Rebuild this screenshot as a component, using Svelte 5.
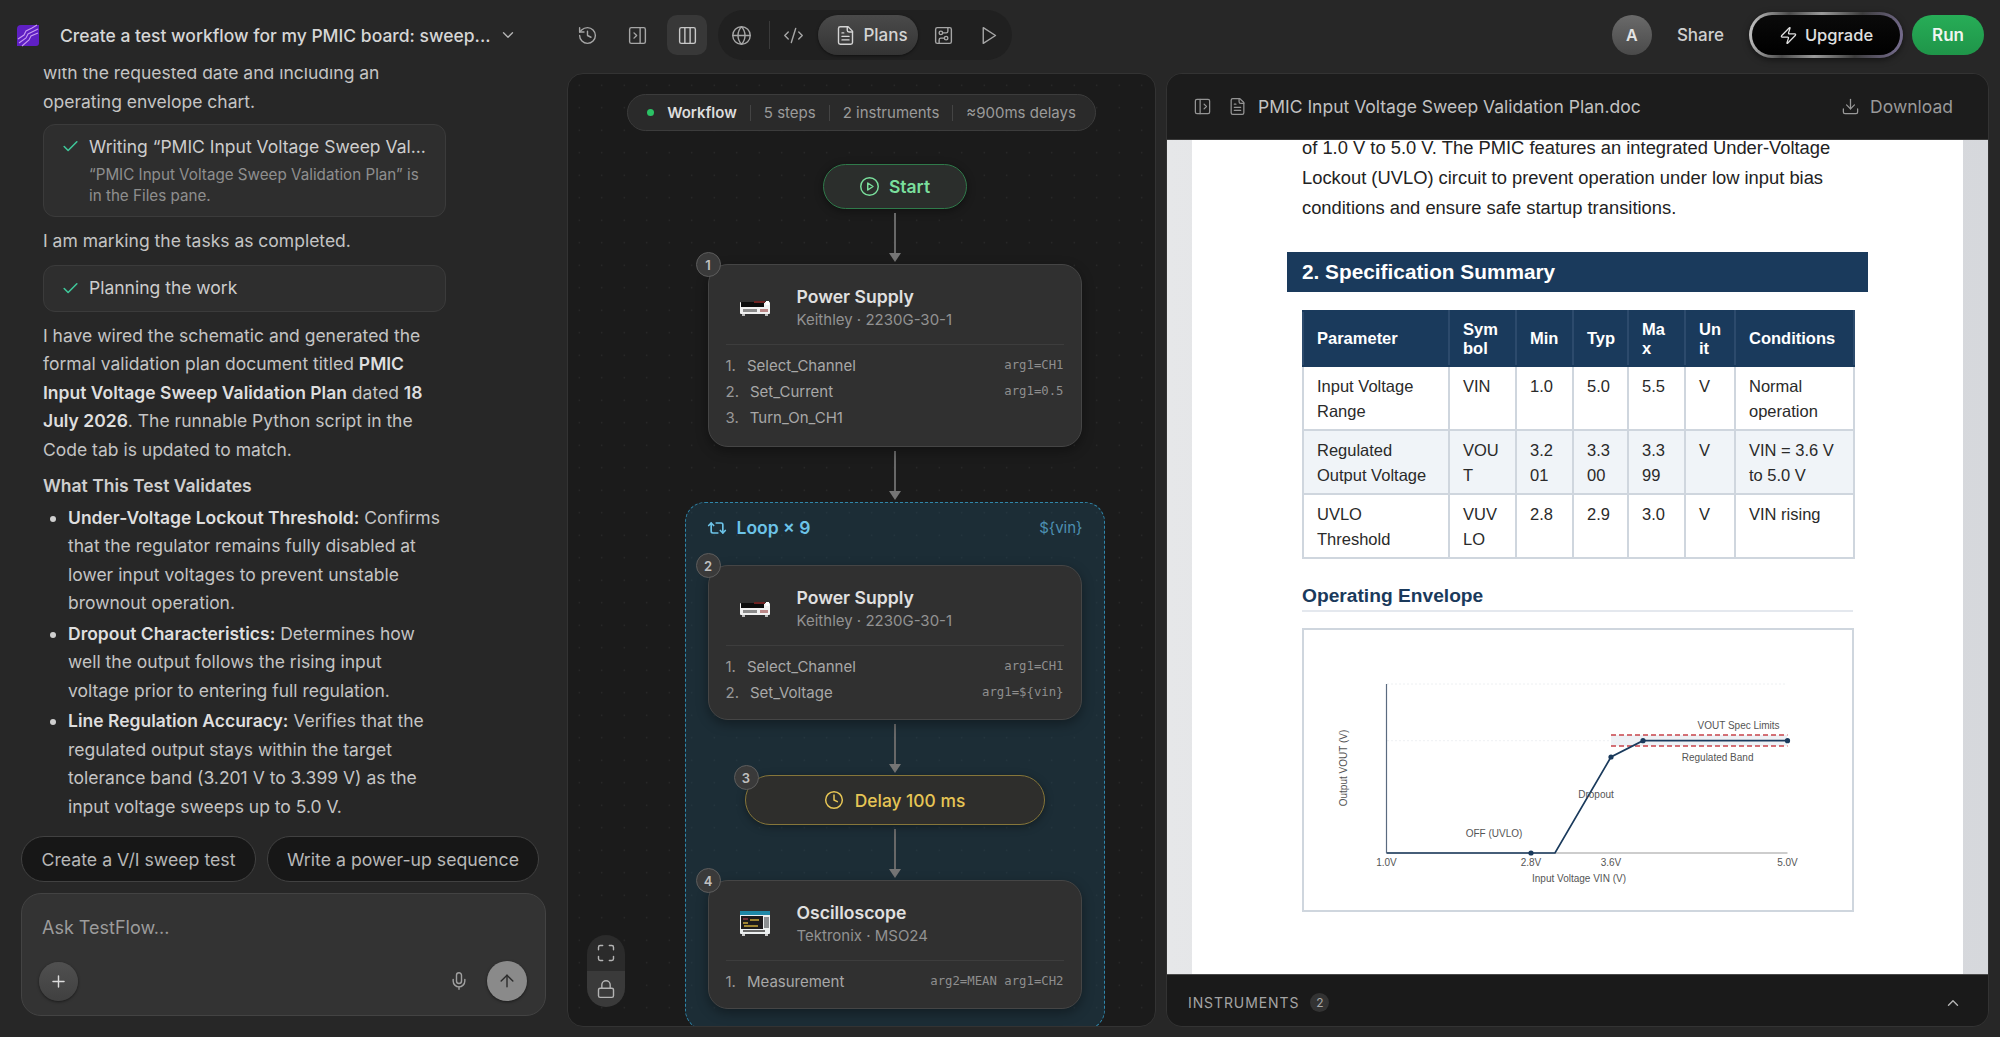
<script lang="ts">
  const icons: Record<string, string> = {
    history: '<path d="M3 12a9 9 0 1 0 9-9 9.75 9.75 0 0 0-6.74 2.74L3 8"/><path d="M3 3v5h5"/><path d="M12 7v5l4 2"/>',
    panelRight: '<rect width="18" height="18" x="3" y="3" rx="2"/><path d="M15 3v18"/><path d="m8 9 3 3-3 3"/>',
    panelLeft: '<rect width="18" height="18" x="3" y="3" rx="2"/><path d="M9 3v18"/><path d="m14 9 3 3-3 3"/>',
    columns: '<rect width="18" height="18" x="3" y="3" rx="2"/><path d="M9 3v18"/><path d="M15 3v18"/>',
    globe: '<circle cx="12" cy="12" r="10"/><path d="M12 2a14.5 14.5 0 0 0 0 20 14.5 14.5 0 0 0 0-20"/><path d="M2 12h20"/>',
    code: '<path d="m18 16 4-4-4-4"/><path d="m6 8-4 4 4 4"/><path d="m14.5 4-5 16"/>',
    file: '<path d="M15 2H6a2 2 0 0 0-2 2v16a2 2 0 0 0 2 2h12a2 2 0 0 0 2-2V7Z"/><path d="M14 2v4a2 2 0 0 0 2 2h4"/><path d="M10 9H8"/><path d="M16 13H8"/><path d="M16 17H8"/>',
    circuit: '<rect width="18" height="18" x="3" y="3" rx="2"/><path d="M11 9h4a2 2 0 0 0 2-2V3"/><circle cx="9" cy="9" r="2"/><path d="M7 21v-4a2 2 0 0 1 2-2h4"/><circle cx="15" cy="15" r="2"/>',
    play: '<polygon points="6 3 20 12 6 21 6 3"/>',
    circlePlay: '<circle cx="12" cy="12" r="10"/><polygon points="10 8 16 12 10 16 10 8"/>',
    zap: '<path d="M4 14a1 1 0 0 1-.78-1.63l9.9-10.2a.5.5 0 0 1 .86.46l-1.92 6.02A1 1 0 0 0 13 10h7a1 1 0 0 1 .78 1.63l-9.9 10.2a.5.5 0 0 1-.86-.46l1.92-6.02A1 1 0 0 0 11 14z"/>',
    download: '<path d="M21 15v4a2 2 0 0 1-2 2H5a2 2 0 0 1-2-2v-4"/><polyline points="7 10 12 15 17 10"/><line x1="12" x2="12" y1="15" y2="3"/>',
    repeat: '<path d="m2 9 3-3 3 3"/><path d="M13 18H7a2 2 0 0 1-2-2V6"/><path d="m22 15-3 3-3-3"/><path d="M11 6h6a2 2 0 0 1 2 2v10"/>',
    clock: '<circle cx="12" cy="12" r="10"/><polyline points="12 6 12 12 16 14"/>',
    maximize: '<path d="M8 3H5a2 2 0 0 0-2 2v3"/><path d="M21 8V5a2 2 0 0 0-2-2h-3"/><path d="M3 16v3a2 2 0 0 0 2 2h3"/><path d="M16 21h3a2 2 0 0 0 2-2v-3"/>',
    lock: '<rect width="18" height="11" x="3" y="11" rx="2"/><path d="M7 11V7a5 5 0 0 1 10 0v4"/>',
    mic: '<path d="M12 2a3 3 0 0 0-3 3v7a3 3 0 0 0 6 0V5a3 3 0 0 0-3-3Z"/><path d="M19 10v2a7 7 0 0 1-14 0v-2"/><line x1="12" x2="12" y1="19" y2="22"/>',
    plus: '<path d="M5 12h14"/><path d="M12 5v14"/>',
    up: '<path d="m5 12 7-7 7 7"/><path d="M12 19V5"/>',
    check: '<path d="M20 6 9 17l-5-5"/>',
    chevDown: '<path d="m6 9 6 6 6-6"/>',
    chevUp: '<path d="m18 15-6-6-6 6"/>'
  };

  const psu = {
    title: 'Power Supply',
    sub: 'Keithley · 2230G-30-1'
  };
  const firstSteps = [
    { name: 'Select_Channel', arg: 'arg1=CH1' },
    { name: 'Set_Current', arg: 'arg1=0.5' },
    { name: 'Turn_On_CH1', arg: '' }
  ];
  const loopSteps = [
    { name: 'Select_Channel', arg: 'arg1=CH1' },
    { name: 'Set_Voltage', arg: 'arg1=${vin}' }
  ];
  const scopeSteps = [{ name: 'Measurement', arg: 'arg2=MEAN arg1=CH2' }];

  const specs = [
    ['Input Voltage Range', 'VIN', '1.0', '5.0', '5.5', 'V', 'Normal operation'],
    ['Regulated Output Voltage', 'VOUT', '3.201', '3.300', '3.399', 'V', 'VIN = 3.6 V to 5.0 V'],
    ['UVLO Threshold', 'VUVLO', '2.8', '2.9', '3.0', 'V', 'VIN rising']
  ];
  const colWidths = [146, 67, 57, 55, 57, 50, 119];
  // the narrow columns break their header mid-word in the document
  const specHead = [['Parameter'], ['Sym', 'bol'], ['Min'], ['Typ'], ['Ma', 'x'], ['Un', 'it'], ['Conditions']];
</script>

{#snippet icon(name: string, size = 20, sw = 1.6)}
  <svg class="ic" width={size} height={size} viewBox="0 0 24 24" fill="none" stroke="currentColor" stroke-width={sw} stroke-linecap="round" stroke-linejoin="round">{@html icons[name]}</svg>
{/snippet}

{#snippet arrow()}
  <div class="arrow"><span class="shaft"></span><span class="head"></span></div>
{/snippet}

{#snippet psuPic()}
  <svg class="pic" width="30" height="16" viewBox="0 0 30 16">
    <rect x="0" y="2" width="30" height="12" rx="1" fill="#f1f1f1" />
    <rect x="1" y="2" width="23" height="5" fill="#0c0c0c" />
    <rect x="14" y="1" width="11" height="2" fill="#6e2222" />
    <rect x="26" y="1" width="3" height="4" fill="#fff" />
    <rect x="3" y="9" width="14" height="3" fill="#8b8b8b" />
    <rect x="20" y="9" width="8" height="3" fill="#b88" />
    <rect x="2" y="14" width="3" height="2" fill="#bbb" />
    <rect x="25" y="14" width="3" height="2" fill="#bbb" />
  </svg>
{/snippet}

{#snippet scopePic()}
  <svg class="pic" width="30" height="26" viewBox="0 0 30 26">
    <rect x="0" y="0" width="30" height="23" rx="1" fill="#eceff0" />
    <rect x="0" y="0" width="30" height="4" fill="#1f88a8" />
    <rect x="1" y="5" width="22" height="13" fill="#1c1a1c" />
    <path d="M3 12h5M10 9h9M4 15h14" stroke="#c9a83a" stroke-width="1.4" />
    <path d="M3 8h5" stroke="#c24a5a" stroke-width="1.2" />
    <rect x="24" y="6" width="5" height="11" fill="#8b8f92" />
    <rect x="3" y="19" width="22" height="2" fill="#666" />
    <rect x="2" y="23" width="3" height="2" fill="#ccc" />
    <rect x="25" y="23" width="3" height="2" fill="#ccc" />
  </svg>
{/snippet}

{#snippet stepCard(n: number, title: string, sub: string, steps: { name: string; arg: string }[], pic: 'psu' | 'scope', tall = false)}
  <div class="node" class:tall>
    <span class="badge">{n}</span>
    <div class="node-head">
      <div class="pic-box">
        {#if pic === 'psu'}{@render psuPic()}{:else}{@render scopePic()}{/if}
      </div>
      <div>
        <div class="node-title">{title}</div>
        <div class="node-sub">{sub}</div>
      </div>
    </div>
    <div class="node-steps">
      {#each steps as s, i}
        <div class="step">
          <span class="step-no">{i + 1}.</span>
          <span class="step-name">{s.name}</span>
          <span class="step-arg">{s.arg}</span>
        </div>
      {/each}
    </div>
  </div>
{/snippet}

<div class="app">
  <header class="topbar">
    <div class="top-left">
      <svg class="logo" width="22" height="23" viewBox="0 0 22 23">
        <path d="M4 1h18v18a3 3 0 0 1-3 3H0V5a4 4 0 0 1 4-4z" fill="#5f1fc4" />
        <path d="M1 15l6-4 2-4 6-3 5-3M2 19l7-5 2-4 6-3 4-2M5 22l7-6 2-4 7-3" fill="none" stroke="#c79bf0" stroke-width="1.1" />
      </svg>
      <span class="chat-title">Create a test workflow for my PMIC board: sweep...</span>
      {@render icon('chevDown', 18, 1.8)}
    </div>
    <button class="tool">{@render icon('history', 21)}</button>
    <button class="tool">{@render icon('panelRight', 21)}</button>
    <button class="tool active">{@render icon('columns', 21)}</button>
    <div class="tabs">
      <button class="tab">{@render icon('globe', 21)}</button>
      <span class="tab-sep"></span>
      <button class="tab">{@render icon('code', 21)}</button>
      <button class="plans">{@render icon('file', 21)}<span>Plans</span></button>
      <button class="tab">{@render icon('circuit', 21)}</button>
      <button class="tab">{@render icon('play', 21)}</button>
    </div>
    <div class="top-right">
      <span class="avatar">A</span>
      <span class="share">Share</span>
      <button class="upgrade">{@render icon('zap', 19)}<span>Upgrade</span></button>
      <button class="run">Run</button>
    </div>
  </header>

  <div class="main">
    <aside class="chat">
      <div class="scroller">
        <div class="scroll-inner">
          <p>with the requested date and including an operating envelope chart.</p>
          <div class="task first">
            <span class="tick">{@render icon('check', 19, 2)}</span>
            <div>
              <div class="task-title">Writing “PMIC Input Voltage Sweep Val...</div>
              <div class="task-sub">“PMIC Input Voltage Sweep Validation Plan” is in the Files pane.</div>
            </div>
          </div>
          <p class="gap-10">I am marking the tasks as completed.</p>
          <div class="task second">
            <span class="tick">{@render icon('check', 19, 2)}</span>
            <div class="task-title">Planning the work</div>
          </div>
          <p class="gap-10">I have wired the schematic and generated the formal validation plan document titled <b>PMIC Input Voltage Sweep Validation Plan</b> dated <b>18 July 2026</b>. The runnable Python script in the Code tab is updated to match.</p>
          <h4>What This Test Validates</h4>
          <ul>
            <li><b>Under-Voltage Lockout Threshold:</b> Confirms that the regulator remains fully disabled at lower input voltages to prevent unstable brownout operation.</li>
            <li><b>Dropout Characteristics:</b> Determines how well the output follows the rising input voltage prior to entering full regulation.</li>
            <li><b>Line Regulation Accuracy:</b> Verifies that the regulated output stays within the target tolerance band (3.201 V to 3.399 V) as the input voltage sweeps up to 5.0 V.</li>
          </ul>
        </div>
      </div>
      <div class="chips">
        <button class="chip wide-a">Create a V/I sweep test</button>
        <button class="chip wide-b">Write a power-up sequence</button>
      </div>
      <div class="composer">
        <div class="placeholder">Ask TestFlow...</div>
        <div class="composer-row">
          <button class="add">{@render icon('plus', 19, 1.8)}</button>
          <span class="mic">{@render icon('mic', 20, 1.7)}</span>
          <button class="send">{@render icon('up', 20, 1.7)}</button>
        </div>
      </div>
    </aside>

    <section class="canvas">
      <div class="summary">
        <span class="dot"></span>
        <b>Workflow</b>
        <i></i><span>5 steps</span>
        <i></i><span>2 instruments</span>
        <i></i><span>≈900ms delays</span>
      </div>
      <div class="flow">
        <div class="start">{@render icon('circlePlay', 21, 1.7)}<span>Start</span></div>
        {@render arrow()}
        {@render stepCard(1, psu.title, psu.sub, firstSteps, 'psu', true)}
        {@render arrow()}
        <div class="loop">
          <div class="loop-head">
            <span class="loop-name">{@render icon('repeat', 20, 2)}Loop × 9</span>
            <span class="loop-var">{'${vin}'}</span>
          </div>
          {@render stepCard(2, psu.title, psu.sub, loopSteps, 'psu')}
          {@render arrow()}
          <div class="delay">
            <span class="badge">3</span>
            {@render icon('clock', 20, 1.8)}<span>Delay 100 ms</span>
          </div>
          {@render arrow()}
          {@render stepCard(4, 'Oscilloscope', 'Tektronix · MSO24', scopeSteps, 'scope')}
        </div>
      </div>
      <div class="view-ctrl">
        <button>{@render icon('maximize', 20, 1.7)}</button>
        <button>{@render icon('lock', 20, 1.7)}</button>
      </div>
    </section>

    <section class="doc">
      <div class="doc-head">
        {@render icon('panelLeft', 19)}
        {@render icon('file', 19)}
        <span class="doc-name">PMIC Input Voltage Sweep Validation Plan.doc</span>
        <span class="doc-dl">{@render icon('download', 19)}Download</span>
      </div>
      <div class="doc-view">
        <article class="page">
          <p class="page-text">of 1.0 V to 5.0 V. The PMIC features an integrated Under-Voltage Lockout (UVLO) circuit to prevent operation under low input bias conditions and ensure safe startup transitions.</p>
          <h2>2. Specification Summary</h2>
          <table>
            <colgroup>
              {#each colWidths as w}<col style:width="{w}px" />{/each}
            </colgroup>
            <thead>
              <tr>
                {#each specHead as h}
                  <th>{#each h as part, i}{#if i > 0}<br />{/if}{part}{/each}</th>
                {/each}
              </tr>
            </thead>
            <tbody>
              {#each specs as row}
                <tr>{#each row as c}<td>{c}</td>{/each}</tr>
              {/each}
            </tbody>
          </table>
          <h3>Operating Envelope</h3>
          <div class="chart">
            <svg width="550" height="282" viewBox="1 1 550 282">
              <g stroke="#e9ecef" stroke-dasharray="2 2" stroke-width="0.8">
                <line x1="84" y1="55" x2="484" y2="55" />
                <line x1="84" y1="111.7" x2="484" y2="111.7" />
              </g>
              <rect x="308" y="106" width="176" height="11" fill="#eef1f5" />
              <line x1="83.5" y1="55" x2="83.5" y2="224" stroke="#5a6b80" stroke-width="1.2" />
              <line x1="83.5" y1="224" x2="484.5" y2="224" stroke="#bcbcbc" stroke-width="1.6" />
              <g stroke="#c8434a" stroke-width="1.3" stroke-dasharray="5 3">
                <line x1="308" y1="106" x2="484.5" y2="106" />
                <line x1="308" y1="117" x2="484.5" y2="117" />
              </g>
              <polyline points="83.5,224 252,224 308,128 340,111.7 484.5,111.7" fill="none" stroke="#1a3a5c" stroke-width="1.7" />
              <g fill="#1a3a5c">
                <circle cx="228" cy="224" r="2.6" />
                <circle cx="308" cy="128" r="2.6" />
                <circle cx="340" cy="111.7" r="2.6" />
                <circle cx="484.5" cy="111.7" r="2.6" />
              </g>
              <g font-size="10" fill="#555" text-anchor="middle" font-family="'Liberation Sans', Arial, sans-serif">
                <text x="435.6" y="99.5">VOUT Spec Limits</text>
                <text x="414.6" y="131.5">Regulated Band</text>
                <text x="293" y="168.5">Dropout</text>
                <text x="191" y="207.5">OFF (UVLO)</text>
                <text x="83.5" y="236.5">1.0V</text>
                <text x="228" y="236.5">2.8V</text>
                <text x="308" y="236.5">3.6V</text>
                <text x="484.5" y="236.5">5.0V</text>
                <text x="276" y="252.5">Input Voltage VIN (V)</text>
                <text transform="translate(44 139) rotate(-90)">Output VOUT (V)</text>
              </g>
            </svg>
          </div>
        </article>
      </div>
      <div class="instruments">
        <span class="inst-label">INSTRUMENTS</span>
        <span class="inst-count">2</span>
        <span class="inst-chev">{@render icon('chevUp', 18, 1.9)}</span>
      </div>
    </section>
  </div>
</div>

<style>
  :global(body) {
    margin: 0;
    background: #272727;
    overflow: hidden;
  }
  .app {
    height: 1037px;
    display: flex;
    flex-direction: column;
    background: #272727;
    color: #c4c4c4;
    font-family: Inter, 'Noto Sans', sans-serif;
    font-size: 17.5px;
  }
  button {
    font: inherit;
    color: inherit;
    border: 0;
    background: none;
    padding: 0;
  }
  .ic {
    display: block;
    flex: none;
  }

  /* top bar */
  .topbar {
    height: 68px;
    flex: none;
    display: flex;
    align-items: center;
    gap: 10px;
    padding-top: 2px;
    box-sizing: border-box;
    color: #a6a6a6;
  }
  .top-left {
    width: 557px;
    flex: none;
    display: flex;
    align-items: center;
    padding-left: 17px;
    box-sizing: border-box;
    color: #b5b5b5;
  }
  .logo {
    flex: none;
    margin-right: 21px;
  }
  .chat-title {
    font-size: 17.5px;
    font-weight: 500;
    color: #d6d6d6;
    white-space: nowrap;
    margin-right: 8px;
  }
  .tool {
    width: 40px;
    height: 40px;
    flex: none;
    display: flex;
    align-items: center;
    justify-content: center;
    border-radius: 10px;
  }
  .tool.active {
    background: #383838;
    color: #c8c8c8;
  }
  .tabs {
    width: 294px;
    height: 50px;
    flex: none;
    box-sizing: border-box;
    display: flex;
    align-items: center;
    padding: 0 6px 0 5px;
    margin-left: 1px;
    border-radius: 25px;
    background: #202020;
  }
  .tab {
    width: 36px;
    height: 40px;
    flex: none;
    display: flex;
    align-items: center;
    justify-content: center;
  }
  .tab:last-child {
    margin-left: 9px;
  }
  .tab-sep {
    width: 1px;
    height: 28px;
    margin: 0 5px 0 10px;
    background: #3a3a3a;
  }
  .plans {
    width: 100px;
    height: 40px;
    flex: none;
    margin: 0 7px 0 7px;
    padding-left: 7px;
    box-sizing: border-box;
    display: flex;
    align-items: center;
    justify-content: center;
    gap: 7px;
    border-radius: 20px;
    background: linear-gradient(#4a4a4a, #343434);
    box-shadow: 0 1px 3px rgba(0, 0, 0, 0.5);
    color: #d4d4d4;
    font-size: 17px;
    font-weight: 500;
  }
  .top-right {
    margin-left: auto;
    display: flex;
    align-items: center;
    padding-right: 16px;
  }
  .avatar {
    width: 40px;
    height: 40px;
    border-radius: 50%;
    display: flex;
    align-items: center;
    justify-content: center;
    background: linear-gradient(#6a6a6a, #4a4a4a);
    color: #e4e4e4;
    font-size: 16px;
    font-weight: 600;
  }
  .share {
    margin: 0 25px;
    font-size: 17px;
    font-weight: 500;
    color: #cfcfcf;
  }
  .upgrade {
    width: 154px;
    height: 46px;
    box-sizing: border-box;
    border: 3px solid transparent;
    border-radius: 23px;
    display: flex;
    align-items: center;
    justify-content: center;
    gap: 7px;
    background:
      linear-gradient(#0a0a0a, #000) padding-box,
      linear-gradient(100deg, #ccc, #4a4a4a 25%, #9a9a9a 45%, #3c3c3c 70%, #7a7094) border-box;
    box-shadow: 0 2px 6px rgba(0, 0, 0, 0.5);
    color: #e0e0e0;
    font-size: 16.5px;
    font-weight: 500;
    margin-right: 9px;
  }
  .run {
    width: 72px;
    height: 40px;
    border-radius: 20px;
    background: linear-gradient(#27ad57, #1f9549);
    color: #f0f6f0;
    font-size: 17px;
    font-weight: 600;
  }

  /* columns */
  .main {
    flex: 1;
    min-height: 0;
    display: flex;
    padding-right: 11px;
  }

  /* chat */
  .chat {
    width: 567px;
    flex: none;
    box-sizing: border-box;
    display: flex;
    flex-direction: column;
    padding: 0 21px 21px;
  }
  .scroller {
    flex: 1;
    min-height: 0;
    overflow: hidden;
    padding-left: 22px;
  }
  .scroll-inner {
    width: 403px;
    margin-top: -9px;
    line-height: 28.5px;
  }
  p {
    margin: 0;
  }
  .gap-10 {
    margin-top: 10px;
  }
  b {
    font-weight: 600;
    color: #dedede;
  }
  .task {
    box-sizing: border-box;
    display: flex;
    border: 1px solid #3b3b3b;
    border-radius: 12px;
    background: #2e2e2e;
    padding: 0 10px 0 17px;
  }
  .task.first {
    height: 93px;
    margin-top: 8px;
    padding-top: 10px;
  }
  .task.second {
    height: 47px;
    margin-top: 9px;
    align-items: center;
  }
  .tick {
    width: 28px;
    flex: none;
    color: #3fc79a;
    padding-top: 2px;
  }
  .task.second .tick {
    padding-top: 0;
  }
  .task-title {
    line-height: 24px;
    color: #cdcdcd;
    white-space: nowrap;
  }
  .task-sub {
    margin-top: 5px;
    font-size: 15.2px;
    line-height: 21px;
    color: #8e8e8e;
  }
  h4 {
    margin: 8px 0 0;
    font: inherit;
    font-weight: 600;
    color: #cfcfcf;
  }
  ul {
    margin: 3px 0 0;
    padding-left: 25px;
  }
  li {
    margin-bottom: 2px;
  }
  li::marker {
    color: #cfcfcf;
  }
  .chips {
    display: flex;
    gap: 11px;
    margin-bottom: 11px;
  }
  .chip {
    height: 46px;
    box-sizing: border-box;
    border: 1px solid #414141;
    border-radius: 23px;
    background: #171717;
    color: #b8b8b8;
    font-size: 17.7px;
    white-space: nowrap;
    padding: 0;
  }
  .wide-a {
    width: 235px;
  }
  .wide-b {
    width: 272px;
  }
  .composer {
    width: 525px;
    height: 123px;
    flex: none;
    box-sizing: border-box;
    border: 1px solid #434343;
    border-radius: 20px;
    background: #333333;
    padding: 21px 18px 14px 20px;
    display: flex;
    flex-direction: column;
    justify-content: space-between;
  }
  .placeholder {
    font-size: 18px;
    line-height: 26px;
    color: #9c9c9c;
  }
  .composer-row {
    display: flex;
    align-items: center;
    margin-left: -3px;
  }
  .add {
    width: 39px;
    height: 39px;
    display: flex;
    align-items: center;
    justify-content: center;
    border-radius: 50%;
    background: linear-gradient(#505050, #404040);
    box-shadow: 0 1px 3px rgba(0, 0, 0, 0.5);
    color: #dcdcdc;
  }
  .mic {
    margin-left: auto;
    margin-right: 18px;
    color: #a0a0a0;
  }
  .send {
    width: 40px;
    height: 40px;
    display: flex;
    align-items: center;
    justify-content: center;
    border-radius: 50%;
    background: #8a8a8a;
    box-shadow: 0 1px 3px rgba(0, 0, 0, 0.5);
    color: #2c2c2c;
  }

  /* workflow canvas */
  .canvas {
    position: relative;
    width: 589px;
    height: 954px;
    flex: none;
    margin-top: 5px;
    box-sizing: border-box;
    border: 1px solid #333333;
    border-radius: 16px;
    overflow: hidden;
    display: flex;
    flex-direction: column;
    align-items: center;
    padding-top: 20px;
    background-color: #1b1b1b;
    background-image: radial-gradient(#303030 0.8px, transparent 1px);
    background-size: 22.5px 22.5px;
  }
  .summary {
    height: 37px;
    flex: none;
    box-sizing: border-box;
    display: flex;
    align-items: center;
    padding: 0 19px;
    border: 1px solid #3c3c3c;
    border-radius: 19px;
    background: #2a2a2a;
    font-size: 15px;
    color: #9a9a9a;
    white-space: nowrap;
  }
  .summary b {
    font-weight: 600;
    color: #dcdcdc;
    margin-left: 13px;
  }
  .summary i {
    width: 1px;
    height: 16px;
    margin: 0 13px;
    background: #444;
  }
  .dot {
    width: 7px;
    height: 7px;
    border-radius: 50%;
    background: #2bc265;
  }
  /* the step chain sits right of the pane centre */
  .flow {
    flex: none;
    display: flex;
    flex-direction: column;
    align-items: center;
    margin-left: 66px;
  }
  .start {
    width: 144px;
    height: 45px;
    flex: none;
    box-sizing: border-box;
    margin-top: 33px;
    display: flex;
    align-items: center;
    justify-content: center;
    gap: 9px;
    border: 1px solid #2f7a4a;
    border-radius: 23px;
    background: #2b2e2c;
    box-shadow: 0 2px 8px rgba(0, 0, 0, 0.4);
    color: #7adf9c;
    font-size: 17.5px;
    font-weight: 600;
  }
  .arrow {
    height: 55px;
    flex: none;
    box-sizing: border-box;
    padding: 4px 0 2px;
    display: flex;
    flex-direction: column;
    align-items: center;
  }
  .shaft {
    flex: 1;
    width: 2px;
    background: #686868;
  }
  .head {
    width: 0;
    height: 0;
    border-left: 6.5px solid transparent;
    border-right: 6.5px solid transparent;
    border-top: 9px solid #757575;
  }
  .node {
    position: relative;
    width: 374px;
    flex: none;
    box-sizing: border-box;
    border: 1px solid #454545;
    border-radius: 20px;
    background: #303030;
    box-shadow: 0 4px 12px rgba(0, 0, 0, 0.35);
    padding-bottom: 14px;
  }
  .node.tall {
    padding-bottom: 16px;
  }
  .badge {
    position: absolute;
    left: -13px;
    top: -13px;
    width: 25px;
    height: 25px;
    box-sizing: border-box;
    border: 1.5px solid #5d5d5d;
    border-radius: 50%;
    background: #3a3a3a;
    display: flex;
    align-items: center;
    justify-content: center;
    font-size: 13px;
    font-weight: 600;
    color: #c0c0c0;
  }
  .node-head {
    display: flex;
    align-items: center;
    margin: 0 17px;
    padding: 20px 0 13px 14px;
    border-bottom: 1px solid #3d3d3d;
  }
  .pic-box {
    width: 57px;
    flex: none;
  }
  .pic {
    display: block;
  }
  .node-title {
    font-size: 17.6px;
    line-height: 24px;
    font-weight: 600;
    color: #e0e0e0;
  }
  .node-sub {
    font-size: 15px;
    line-height: 22px;
    color: #929292;
  }
  .node-steps {
    padding: 7px 17px 0;
  }
  .step {
    height: 26px;
    display: flex;
    align-items: center;
    font-size: 15px;
    color: #a8a8a8;
  }
  .step-no {
    margin-right: 11px;
    color: #989898;
  }
  .step-arg {
    margin-left: auto;
    font-family: 'DejaVu Sans Mono', monospace;
    font-size: 12.3px;
    color: #8e8e8e;
  }
  .loop {
    width: 420px;
    flex: none;
    box-sizing: border-box;
    display: flex;
    flex-direction: column;
    align-items: center;
    border: 1.5px dashed #2f86aa;
    border-radius: 20px;
    background: rgba(32, 72, 92, 0.42);
    padding: 0 21px 20px;
  }
  .loop-head {
    width: 100%;
    height: 62px;
    box-sizing: border-box;
    padding-bottom: 13px;
    display: flex;
    align-items: center;
    justify-content: space-between;
    color: #6cc3e8;
  }
  .loop-name {
    display: flex;
    align-items: center;
    gap: 10px;
    font-size: 17.5px;
    font-weight: 600;
  }
  .loop-var {
    font-size: 15px;
    color: #4c90b2;
  }
  .delay {
    position: relative;
    width: 300px;
    height: 50px;
    flex: none;
    box-sizing: border-box;
    display: flex;
    align-items: center;
    justify-content: center;
    gap: 11px;
    border: 1px solid #86763a;
    border-radius: 25px;
    background: #2e2e2c;
    box-shadow: 0 2px 8px rgba(0, 0, 0, 0.35);
    color: #e6c555;
    font-size: 17.4px;
    font-weight: 500;
  }
  .delay .badge {
    left: -12px;
    top: -11px;
  }
  .view-ctrl {
    position: absolute;
    left: 19px;
    top: 861px;
    width: 38px;
    border-radius: 19px;
    overflow: hidden;
    color: #b4b4b4;
  }
  .view-ctrl button {
    width: 38px;
    height: 36px;
    display: flex;
    align-items: center;
    justify-content: center;
    background: #2b2b2b;
  }
  .view-ctrl button + button {
    background: #3a3a3a;
  }

  /* document */
  .doc {
    width: 823px;
    height: 954px;
    flex: none;
    margin: 5px 0 0 10px;
    box-sizing: border-box;
    border: 1px solid #333333;
    border-radius: 16px;
    overflow: hidden;
    display: flex;
    flex-direction: column;
  }
  .doc-head {
    height: 65px;
    flex: none;
    display: flex;
    align-items: center;
    gap: 16px;
    padding: 0 35px 0 26px;
    background: #1c1c1c;
    color: #949494;
  }
  .doc-name {
    margin-left: -5px;
    font-size: 17.5px;
    color: #c2c2c2;
  }
  .doc-dl {
    margin-left: auto;
    display: flex;
    align-items: center;
    gap: 10px;
    font-size: 17.5px;
    color: #999;
  }
  .doc-view {
    flex: 1;
    min-height: 0;
    overflow: hidden;
    padding: 0 25px;
    background: linear-gradient(90deg, #e6e7e9, #d6d8dc);
    border-top: 1px solid #3a3a3a;
  }
  .page {
    height: 100%;
    box-sizing: border-box;
    padding: 0 110px;
    background: #fff;
    color: #222;
    font-family: 'Liberation Sans', Arial, sans-serif;
    overflow: hidden;
  }
  .page-text {
    margin-top: -7px;
    font-size: 18.35px;
    line-height: 30px;
    color: #222;
  }
  h2 {
    height: 40px;
    margin: 29px -15px 18px;
    padding-left: 15px;
    background: #1a3a5c;
    color: #fff;
    font-size: 20.8px;
    line-height: 40px;
    font-weight: 700;
  }
  table {
    width: 552px;
    table-layout: fixed;
    border-collapse: collapse;
    font-size: 16.5px;
    line-height: 25px;
    color: #2a2a2a;
    word-break: break-all;
  }
  th,
  td {
    border: 2px solid #cfd6de;
    padding: 7px 13px 5px;
    text-align: left;
    vertical-align: top;
  }
  th {
    height: 38px;
    padding: 7.5px 13px;
    border-color: #1a3a5c;
    border-right-color: #2c4a6c;
    border-left-color: #2c4a6c;
    background: #1a3a5c;
    color: #fff;
    line-height: 19px;
    font-weight: 700;
    vertical-align: middle;
    white-space: nowrap;
  }
  td:first-child,
  td:last-child {
    word-break: normal;
  }
  tbody tr:nth-child(2) td {
    background: #f0f4f8;
  }
  h3 {
    margin: 24.5px 0 0;
    height: 26px;
    color: #1a3a5c;
    font-size: 19.2px;
    line-height: 24px;
    font-weight: 700;
    border-bottom: 2px solid #e4e8ee;
  }
  .chart {
    width: 552px;
    height: 284px;
    box-sizing: border-box;
    margin-top: 16px;
    border: 2px solid #cfd6de;
  }
  .chart svg {
    display: block;
  }
  .instruments {
    height: 52px;
    flex: none;
    box-sizing: border-box;
    padding: 4px 26px 0 21px;
    display: flex;
    align-items: center;
    border-top: 1px solid #4a4a4a;
    background: #1a1a1a;
  }
  .inst-label {
    font-size: 14px;
    letter-spacing: 0.9px;
    color: #a4a4a4;
  }
  .inst-count {
    width: 19px;
    height: 19px;
    margin-left: 11px;
    border-radius: 50%;
    background: #333;
    display: flex;
    align-items: center;
    justify-content: center;
    font-size: 12px;
    color: #a8a8a8;
  }
  .inst-chev {
    margin-left: auto;
    color: #b0b0b0;
  }
</style>
